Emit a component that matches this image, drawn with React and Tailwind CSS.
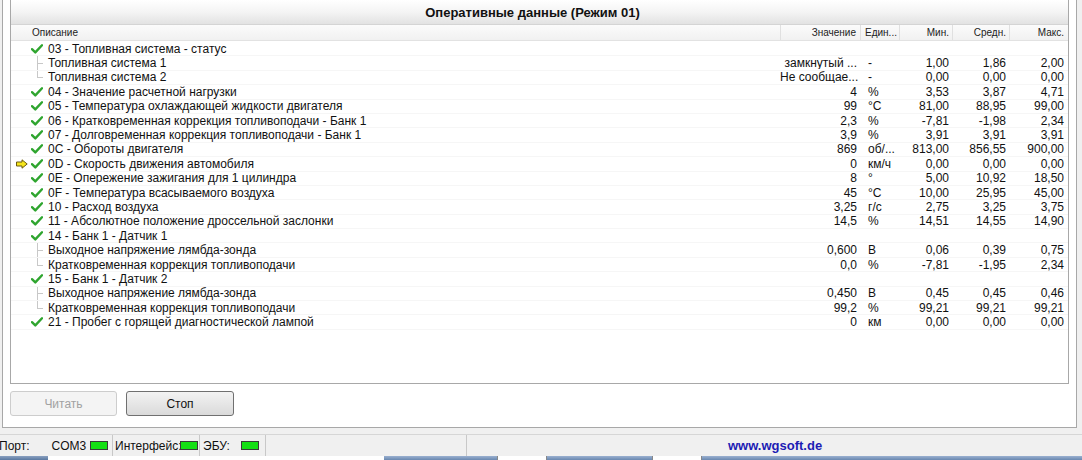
import React from 'react';

const ROWS = [
  { kind: 'group', name: '03 - Топливная система - статус' },
  { kind: 'child', name: 'Топливная система 1', val: 'замкнутый ...', unit: '-', min: '1,00', avg: '1,86', max: '2,00' },
  { kind: 'child', last: true, name: 'Топливная система 2', val: 'Не сообщае...', unit: '-', min: '0,00', avg: '0,00', max: '0,00' },
  { kind: 'item', name: '04 - Значение расчетной нагрузки', val: '4', unit: '%', min: '3,53', avg: '3,87', max: '4,71' },
  { kind: 'item', name: '05 - Температура охлаждающей жидкости двигателя', val: '99', unit: '°C', min: '81,00', avg: '88,95', max: '99,00' },
  { kind: 'item', name: '06 - Кратковременная коррекция топливоподачи - Банк 1', val: '2,3', unit: '%', min: '-7,81', avg: '-1,98', max: '2,34' },
  { kind: 'item', name: '07 - Долговременная коррекция топливоподачи - Банк 1', val: '3,9', unit: '%', min: '3,91', avg: '3,91', max: '3,91' },
  { kind: 'item', name: '0C - Обороты двигателя', val: '869', unit: 'об/...', min: '813,00', avg: '856,55', max: '900,00' },
  { kind: 'item', arrow: true, name: '0D - Скорость движения автомобиля', val: '0', unit: 'км/ч', min: '0,00', avg: '0,00', max: '0,00' },
  { kind: 'item', name: '0E - Опережение зажигания для 1 цилиндра', val: '8', unit: '°', min: '5,00', avg: '10,92', max: '18,50' },
  { kind: 'item', name: '0F - Температура всасываемого воздуха', val: '45', unit: '°C', min: '10,00', avg: '25,95', max: '45,00' },
  { kind: 'item', name: '10 - Расход воздуха', val: '3,25', unit: 'г/с', min: '2,75', avg: '3,25', max: '3,75' },
  { kind: 'item', name: '11 - Абсолютное положение дроссельной заслонки', val: '14,5', unit: '%', min: '14,51', avg: '14,55', max: '14,90' },
  { kind: 'group', name: '14 - Банк 1 - Датчик 1' },
  { kind: 'child', name: 'Выходное напряжение лямбда-зонда', val: '0,600', unit: 'В', min: '0,06', avg: '0,39', max: '0,75' },
  { kind: 'child', last: true, name: 'Кратковременная коррекция топливоподачи', val: '0,0', unit: '%', min: '-7,81', avg: '-1,95', max: '2,34' },
  { kind: 'group', name: '15 - Банк 1 - Датчик 2' },
  { kind: 'child', name: 'Выходное напряжение лямбда-зонда', val: '0,450', unit: 'В', min: '0,45', avg: '0,45', max: '0,46' },
  { kind: 'child', last: true, name: 'Кратковременная коррекция топливоподачи', val: '99,2', unit: '%', min: '99,21', avg: '99,21', max: '99,21' },
  { kind: 'item', name: '21 - Пробег с горящей диагностической лампой', val: '0', unit: 'км', min: '0,00', avg: '0,00', max: '0,00' },
];

const Check = () => (
  <svg width="12" height="10" viewBox="0 0 12 10">
    <path d="M1 5.2 L4.3 8.4 L11 1.3" fill="none" stroke="#2fa52f" strokeWidth="2.4" strokeLinecap="round" strokeLinejoin="round" />
  </svg>
);

const Arrow = () => (
  <svg width="12" height="10" viewBox="0 0 12 10">
    <path d="M0.5 3 H6 V0.8 L11.2 5 L6 9.2 V7 H0.5 Z" fill="#f5e51c" stroke="#6b5a10" strokeWidth="1" strokeLinejoin="round" />
  </svg>
);

const Led = () => <span className="inline-block w-[18px] h-[9px] bg-[#14e014] border border-[#3a3a3a]" />;

export default function App() {
  return (
    <div className="w-[1082px] h-[460px] bg-[#f0f0f0] flex flex-col overflow-hidden text-[12px] text-[#111]" style={{ fontFamily: '"Liberation Sans", Arial, sans-serif' }}>
      <div className="h-[428px] shrink-0 flex">
        <div className="ml-[2px] w-[1075px] h-[428px] bg-white border-l border-r border-b border-[#a8a8a8] px-[7px] flex flex-col">
          <div className="w-[1059px] h-[384px] shrink-0 border-l border-r border-b border-[#a8a8a8] flex flex-col">
            <div className="h-[25px] shrink-0 flex items-end justify-center bg-gradient-to-b from-white via-[#f4f4f4] to-[#e2e2e2] border-b border-[#d4d4d4] pb-[2px]">
              <span className="font-bold text-[13px] pr-[14px]">Оперативные данные (Режим 01)</span>
            </div>
            <div className="h-[16px] shrink-0 flex items-center text-[10px] text-[#222] bg-gradient-to-b from-[#fbfbfb] to-[#f1f1f1] border-b border-[#e2e2e2]">
              <div className="w-[769px] pl-[21px]">Описание</div>
              <div className="w-[80px] h-full flex items-center justify-end pr-[4px] border-l border-[#e0e0e0]">Значение</div>
              <div className="w-[39px] h-full flex items-center pl-[4px] border-l border-[#e0e0e0]">Един...</div>
              <div className="w-[53px] h-full flex items-center justify-end pr-[3px] border-l border-[#e0e0e0]">Мин.</div>
              <div className="w-[57px] h-full flex items-center justify-end pr-[3px] border-l border-[#e0e0e0]">Средн.</div>
              <div className="w-[58px] h-full flex items-center justify-end pr-[3px] border-l border-[#e0e0e0]">Макс.</div>
            </div>
            <div className="flex flex-col pt-[1px]">
              {ROWS.map((r, i) => (
                <div key={i} className="h-[14.4px] flex items-center leading-none border-b border-[#f6f6f6]">
                  <div className="w-[769px] h-full flex items-center">
                    <div className="w-[5px]" />
                    <div className="w-[12px] flex items-center">{r.arrow && <Arrow />}</div>
                    {r.kind === 'child' ? (
                      <div className="w-[36px] h-full flex">
                        <div className="w-[3px]" />
                        <div className="relative w-[12px] h-full">
                          <div className={`absolute left-[6px] top-0 w-px bg-[#c8c8c8] ${r.last ? 'h-1/2' : 'h-full'}`} />
                          <div className="absolute left-[6px] top-1/2 w-[6px] h-px bg-[#c8c8c8]" />
                        </div>
                      </div>
                    ) : (
                      <div className="w-[36px] flex items-center">
                        <div className="w-[3px]" />
                        <Check />
                        <div className="w-[6px]" />
                      </div>
                    )}
                    <span className="-ml-[16px]">{r.name}</span>
                  </div>
                  <div className="w-[80px] text-right pr-[3px] whitespace-nowrap overflow-hidden">{r.val}</div>
                  <div className="w-[39px] pl-[8px] whitespace-nowrap">{r.unit}</div>
                  <div className="w-[53px] text-right pr-[3px]">{r.min}</div>
                  <div className="w-[57px] text-right pr-[3px]">{r.avg}</div>
                  <div className="w-[58px] text-right pr-[3px]">{r.max}</div>
                </div>
              ))}
            </div>
          </div>
          <div className="mt-[7px] flex gap-[9px]">
            <button className="w-[107px] h-[25px] rounded-[3px] border border-[#cdcdcd] bg-[#f4f4f4] text-[#a2a2a2]">Читать</button>
            <button className="w-[108px] h-[25px] rounded-[3px] border border-[#707070] bg-gradient-to-b from-[#f3f3f3] to-[#dadada] text-[#111]">Стоп</button>
          </div>
        </div>
      </div>
      <div className="h-[28px] shrink-0 pt-[6px]">
        <div className="h-[22px] flex items-center border-t border-[#d6d6d6] text-[12px]">
          <div className="w-[113px] h-full flex items-center -ml-[1px]">
            <span>Порт:</span>
            <span className="ml-[22px]">COM3</span>
            <span className="ml-[4px] flex"><Led /></span>
          </div>
          <div className="w-[87px] h-full flex items-center border-l border-[#c8c8c8] pl-[2px]">
            <span>Интерфейс:</span>
            <span className="-ml-[2px] flex"><Led /></span>
          </div>
          <div className="w-[66px] h-full flex items-center border-l border-[#c8c8c8] pl-[3px]">
            <span>ЭБУ:</span>
            <span className="ml-[11px] flex"><Led /></span>
          </div>
          <div className="w-[201px] h-full border-l border-[#c8c8c8]" />
          <div className="flex-1 h-full flex items-center border-l border-[#c8c8c8] pl-[261px]">
            <span className="font-bold text-[13px] text-[#1c1cb4]">www.wgsoft.de</span>
          </div>
        </div>
      </div>
      <div className="h-[4px] shrink-0 flex">
        <div className="w-[48px] bg-gradient-to-b from-[#8aa0c0] to-[#5a78a0]" />
        <div className="w-[336px] bg-white" />
        <div className="w-[113px] bg-gradient-to-b from-[#9ab0d0] to-[#6a88b0]" />
        <div className="w-[50px] bg-white border-l border-r border-[#888]" />
        <div className="w-[105px] bg-gradient-to-b from-[#9ab0d0] to-[#6a88b0]" />
        <div className="w-[50px] bg-white border-l border-r border-[#888]" />
        <div className="flex-1 bg-gradient-to-b from-[#9ab0d0] to-[#6a88b0]" />
      </div>
    </div>
  );
}
